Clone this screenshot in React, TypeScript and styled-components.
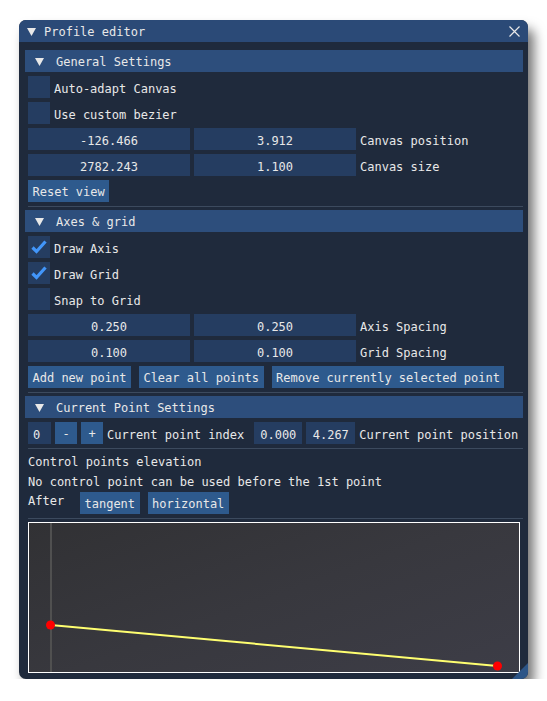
import React from "react";
import styled, { createGlobalStyle } from "styled-components";

const Global = createGlobalStyle`
  html, body { margin: 0; padding: 0; background: #ffffff; }
  body { font-family: "DejaVu Sans Mono", "Liberation Mono", monospace; font-size: 12px; }
  * { box-sizing: border-box; }
`;

const Window = styled.div`
  position: relative;
  margin: 20px 0 0 19px;
  width: 509px;
  height: 659px;
  background: #1f2a3c;
  border-radius: 7px;
  box-shadow: 6px 9px 12px rgba(0, 0, 0, 0.55);
  overflow: hidden;
  color: #e8e8e8;
  display: flex;
  flex-direction: column;
`;

const TitleBar = styled.div`
  height: 22px;
  flex: none;
  background: #2b4a77;
  display: flex;
  align-items: center;
  padding: 1px 8px 0 8px;
  gap: 8px;
  line-height: 16px;
`;

const TitleText = styled.span`
  flex: 1;
  padding-top: 1px;
`;

const Content = styled.div`
  display: flex;
  flex-direction: column;
  gap: 4px;
  padding: 8px 5px 0 6px;
`;

const Header = styled.div`
  height: 22px;
  background: #2d4e7c;
  display: flex;
  align-items: center;
  padding: 2px 0 0 10px;
  gap: 12px;
  line-height: 16px;
`;

const Row = styled.div<{ $gap?: number }>`
  display: flex;
  align-items: center;
  gap: ${(p) => p.$gap ?? 4}px;
  padding-left: 3px;
  height: 22px;
  line-height: 16px;
  white-space: nowrap;
`;

const TopRow = styled(Row)`
  align-items: flex-start;
`;

const Box = styled.div`
  width: 22px;
  height: 22px;
  background: #253d61;
  display: flex;
  align-items: center;
  justify-content: center;
`;

const Field = styled.div<{ $w: number; $align?: string; $ml?: number }>`
  width: ${(p) => p.$w}px;
  height: 22px;
  margin-left: ${(p) => p.$ml ?? 0}px;
  background: #253d61;
  display: flex;
  align-items: center;
  justify-content: ${(p) => p.$align ?? "center"};
  padding: 3px 5px 0;
`;

const Button = styled.div<{ $w?: number }>`
  height: 22px;
  ${(p) => (p.$w ? `width: ${p.$w}px; justify-content: center;` : "")}
  background: #2e5a8d;
  display: flex;
  align-items: center;
  padding: 2px 4.5px 0;
`;

const Label = styled.span`
  padding-top: 3px;
`;

const PlainLabel = styled.span<{ $w?: number }>`
  ${(p) => (p.$w ? `width: ${p.$w}px;` : "")}
  line-height: 16px;
  padding-top: 1px;
`;

const Separator = styled.div`
  height: 1px;
  margin: 0 0 -1px 3px;
  background: #3c4a5e;
`;

const TextLine = styled.div`
  height: 16px;
  line-height: 16px;
  padding: 2px 0 0 3px;
  white-space: nowrap;
`;

const Canvas = styled.div`
  margin-left: 3px;
  width: 492px;
  height: 151px;
  border: 1px solid #ffffff;
  background: linear-gradient(160deg, #313134 0%, #38383e 50%, #3d3d47 100%);
`;

const Grip = styled.div`
  position: absolute;
  right: 0;
  bottom: 0;
  width: 16px;
  height: 16px;
  background: #2c5587;
  clip-path: polygon(100% 0, 100% 100%, 0 100%);
`;

const Tri = () => (
  <svg width={9} height={8} viewBox="0 0 9 8" style={{ flex: "none" }}>
    <polygon points="0,0 9,0 4.5,8" fill="#e8e8e8" />
  </svg>
);

const Check = () => (
  <svg width="22" height="22" viewBox="0 0 22 22">
    <polyline points="4.5,11.5 8.5,15.5 17.5,5.5" fill="none" stroke="#4296fa" strokeWidth="3.2" />
  </svg>
);

const CheckRow = ({ label, checked }: { label: string; checked?: boolean }) => (
  <Row>
    <Box>{checked ? <Check /> : null}</Box>
    <Label>{label}</Label>
  </Row>
);

const Float2Row = ({ a, b, label }: { a: string; b: string; label: string }) => (
  <Row>
    <Field $w={162}>{a}</Field>
    <Field $w={162}>{b}</Field>
    <Label>{label}</Label>
  </Row>
);

export default function App() {
  return (
    <>
      <Global />
      <Window>
        <TitleBar>
          <Tri />
          <TitleText>Profile editor</TitleText>
          <svg width="11" height="11" viewBox="0 0 11 11">
            <path d="M0.5 0.5 L10.5 10.5 M10.5 0.5 L0.5 10.5" stroke="#e8e8e8" strokeWidth="1.2" />
          </svg>
        </TitleBar>
        <Content>
          <Header>
            <Tri />
            <span>General Settings</span>
          </Header>
          <CheckRow label="Auto-adapt Canvas" />
          <CheckRow label="Use custom bezier" />
          <Float2Row a="-126.466" b="3.912" label="Canvas position" />
          <Float2Row a="2782.243" b="1.100" label="Canvas size" />
          <Row>
            <Button>Reset view</Button>
          </Row>
          <Separator />
          <Header>
            <Tri />
            <span>Axes &amp; grid</span>
          </Header>
          <CheckRow label="Draw Axis" checked />
          <CheckRow label="Draw Grid" checked />
          <CheckRow label="Snap to Grid" />
          <Float2Row a="0.250" b="0.250" label="Axis Spacing" />
          <Float2Row a="0.100" b="0.100" label="Grid Spacing" />
          <Row $gap={8}>
            <Button>Add new point</Button>
            <Button>Clear all points</Button>
            <Button>Remove currently selected point</Button>
          </Row>
          <Separator />
          <Header>
            <Tri />
            <span>Current Point Settings</span>
          </Header>
          <Row>
            <Field $w={23} $align="flex-start">0</Field>
            <Button $w={22}>-</Button>
            <Button $w={22}>+</Button>
            <Label>Current point index</Label>
            <Field $w={48} $ml={6}>0.000</Field>
            <Field $w={49}>4.267</Field>
            <Label>Current point position</Label>
          </Row>
          <Separator />
          <TextLine>Control points elevation</TextLine>
          <TextLine>No control point can be used before the 1st point</TextLine>
          <TopRow $gap={8}>
            <PlainLabel $w={44}>After</PlainLabel>
            <Button>tangent</Button>
            <Button>horizontal</Button>
          </TopRow>
          <Separator />
          <Canvas>
            <svg width="490" height="149" viewBox="0 0 490 149">
              <line x1="22" y1="0" x2="22" y2="149" stroke="#505050" strokeWidth="2" />
              <line x1="21.5" y1="102" x2="468.5" y2="143" stroke="#ffff70" strokeWidth="2" />
              <circle cx="21.5" cy="102" r="4.5" fill="#ff0000" />
              <circle cx="468.5" cy="143" r="4.5" fill="#ff0000" />
            </svg>
          </Canvas>
        </Content>
        <Grip />
      </Window>
    </>
  );
}
